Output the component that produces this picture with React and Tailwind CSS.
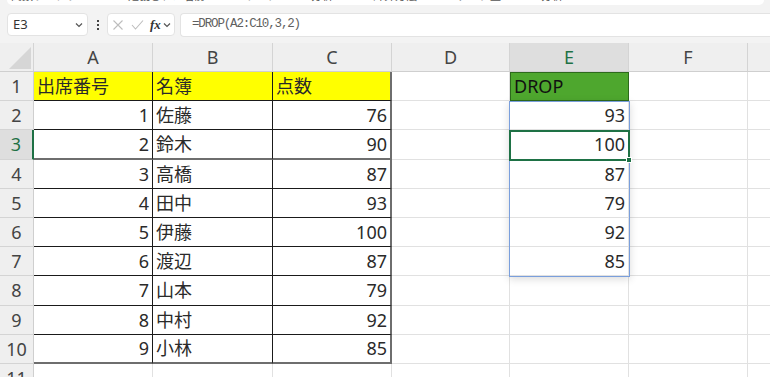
import React from "react";

const FONT = { fontFamily: '"Noto Sans", "Noto Sans CJK JP", sans-serif' };

const rowHeights = ["h-[29px]", "h-[29px]", "h-[30px]", "h-[29px]", "h-[29px]", "h-[29px]", "h-[29px]", "h-[30px]", "h-[29px]", "h-[29px]"];

const table = [
  ["出席番号", "名簿", "点数"],
  ["1", "佐藤", "76"],
  ["2", "鈴木", "90"],
  ["3", "高橋", "87"],
  ["4", "田中", "93"],
  ["5", "伊藤", "100"],
  ["6", "渡辺", "87"],
  ["7", "山本", "79"],
  ["8", "中村", "92"],
  ["9", "小林", "85"],
];

const eCol = ["DROP", "93", "100", "87", "79", "92", "85"];

function Chevron({ className }) {
  return (
    <svg className={className} width="10" height="10" viewBox="0 0 10 10" fill="none" stroke="#555" strokeWidth="1.2">
      <path d="M2 3.5 L5 6.5 L8 3.5" />
    </svg>
  );
}

function TableCell({ r, c, text }) {
  const yellow = r === 0;
  const bottomThick = r === 2 || r === 9;
  const base = "flex items-center px-[3px] text-[18px] text-[#2a2a2a] shrink-0 ";
  let w = c === 0 ? "w-[119px] " : c === 1 ? "w-[120px] " : "w-[119px] ";
  let right = c === 2 ? "border-r-2 border-r-[#6e6e6e] " : "border-r border-r-[#1a1a1a] ";
  let bottom = bottomThick ? "border-b-2 border-b-[#6e6e6e] " : "border-b border-b-[#1a1a1a] ";
  let bg = yellow ? "bg-[#ffff00] " : "bg-white ";
  let align = !yellow && (c === 0 || c === 2) ? "justify-end " : "justify-start ";
  return <div className={base + w + right + bottom + bg + align}>{text}</div>;
}

export default function App() {
  return (
    <div className="w-[770px] h-[377px] overflow-hidden bg-white relative" style={FONT}>
      {/* Top area */}
      <div className="h-[43px] bg-[#f3f3f3] flex flex-col">
        <div className="h-[5px] ml-[7px] mr-[6px] bg-white rounded-b-[5px] overflow-hidden flex gap-[40px] pl-[4px] text-[11px] text-[#555] leading-none">
          <span className="-mt-[10px]">関数ライブラリ</span>
          <span className="-mt-[10px]">定義された名前</span>
          <span className="-mt-[10px]">ワークシート分析</span>
          <span className="-mt-[10px]">計算方法</span>
          <span className="-mt-[10px]">データ型</span>
          <span className="-mt-[10px]">分析</span>
        </div>
        <div className="flex items-center mt-[8px] h-[23px]">
          <div className="ml-[7px] w-[81px] h-[23px] bg-white border border-[#e3e3e3] rounded-[4px] flex items-center justify-between pl-[5px] pr-[3px]">
            <span className="text-[13px] text-[#333]" style={{ fontFamily: '"Noto Sans", sans-serif' }}>E3</span>
            <Chevron />
          </div>
          <div className="w-[19px] flex flex-col items-center justify-center gap-[2px]">
            <span className="w-[2px] h-[2px] bg-[#444]"></span>
            <span className="w-[2px] h-[2px] bg-[#444]"></span>
            <span className="w-[2px] h-[2px] bg-[#444]"></span>
          </div>
          <div className="w-[68px] h-[23px] bg-white border border-[#e3e3e3] rounded-[4px] flex items-center pl-[4px]">
            <svg width="12" height="12" viewBox="0 0 12 12" stroke="#bdbdbd" strokeWidth="1.1" fill="none">
              <path d="M1.5 1.5 L10.5 10.5 M10.5 1.5 L1.5 10.5" />
            </svg>
            <svg className="ml-[7px]" width="13" height="12" viewBox="0 0 13 12" stroke="#bdbdbd" strokeWidth="1.1" fill="none">
              <path d="M1 6 L4.5 10 L12 1.5" />
            </svg>
            <span className="ml-[6px] text-[13px] italic font-bold text-[#333] leading-none" style={{ fontFamily: '"Liberation Serif", serif' }}>fx</span>
            <Chevron className="ml-[1px]" />
          </div>
          <div className="ml-[5px] flex-1 h-[24px] bg-white border border-r-0 border-[#e3e3e3] rounded-l-[4px] flex items-center pl-[11px]">
            <span className="text-[12.5px] tracking-[-1.15px] text-[#5f5f5f]" style={{ fontFamily: '"Liberation Mono", monospace' }}>=DROP(A2:C10,3,2)</span>
          </div>
        </div>
      </div>

      {/* Grid */}
      <div className="relative">
        {/* column header */}
        <div className="flex h-[29px] bg-[#efefef] border-b border-b-[#cfcfcf] text-[18px] text-[#444]">
          <div className="w-[34px] shrink-0 relative border-r border-r-[#d4d4d4]">
            <svg className="absolute right-[2px] bottom-[2px]" width="22" height="22" viewBox="0 0 22 22">
              <path d="M22 0 L22 22 L0 22 Z" fill="#d6d6d6" />
            </svg>
          </div>
          <div className="w-[119px] shrink-0 flex items-center justify-center border-r border-r-[#d4d4d4]">A</div>
          <div className="w-[120px] shrink-0 flex items-center justify-center border-r border-r-[#d4d4d4]">B</div>
          <div className="w-[119px] shrink-0 flex items-center justify-center border-r border-r-[#d4d4d4]">C</div>
          <div className="w-[118px] shrink-0 flex items-center justify-center border-r border-r-[#d4d4d4]">D</div>
          <div className="w-[119px] shrink-0 flex items-center justify-center border-r border-r-[#d4d4d4] bg-[#dedede] text-[#1e7145]">E</div>
          <div className="w-[119px] shrink-0 flex items-center justify-center border-r border-r-[#d4d4d4]">F</div>
          <div className="flex-1"></div>
        </div>

        {/* rows */}
        {table.map((row, r) => (
          <div key={r} className={"flex " + rowHeights[r]}>
            <div
              className={
                r === 2
                  ? "w-[34px] shrink-0 flex items-center justify-center bg-[#dedede] text-[#1e7145] text-[18px] border-r-2 border-r-[#1e7145] border-b border-b-[#d4d4d4]"
                  : "w-[34px] shrink-0 flex items-center justify-center bg-[#efefef] text-[#444] text-[18px] border-r border-r-[#cfcfcf] border-b border-b-[#d4d4d4]"
              }
            >
              {r + 1}
            </div>
            {row.map((t, c) => (
              <TableCell key={c} r={r} c={c} text={t} />
            ))}
            <div className="w-[118px] shrink-0 border-r border-r-[#e1e1e1] border-b border-b-[#e1e1e1]"></div>
            {r === 0 ? (
              <div className="w-[119px] shrink-0 flex items-center px-[3px] text-[18px] text-[#111] bg-[#4ea72e] border border-[#2d6a1c]">
                DROP
              </div>
            ) : r < 7 ? (
              <div className="w-[119px] shrink-0 flex items-center justify-end px-[3px] text-[18px] text-[#2a2a2a] border-r border-r-[#e1e1e1] border-b border-b-[#e1e1e1]">
                {eCol[r]}
              </div>
            ) : (
              <div className="w-[119px] shrink-0 border-r border-r-[#e1e1e1] border-b border-b-[#e1e1e1]"></div>
            )}
            <div className="w-[119px] shrink-0 border-r border-r-[#e1e1e1] border-b border-b-[#e1e1e1]"></div>
            <div className="flex-1 border-b border-b-[#e1e1e1]"></div>
          </div>
        ))}

        {/* row 11 partial */}
        <div className="flex h-[29px]">
          <div className="w-[34px] shrink-0 flex items-center justify-center bg-[#efefef] text-[#444] text-[18px] border-r border-r-[#cfcfcf]">
            11
          </div>
          <div className="w-[119px] shrink-0 border-r border-r-[#e1e1e1]"></div>
          <div className="w-[120px] shrink-0 border-r border-r-[#e1e1e1]"></div>
          <div className="w-[119px] shrink-0 border-r border-r-[#e1e1e1]"></div>
          <div className="w-[118px] shrink-0 border-r border-r-[#e1e1e1]"></div>
          <div className="w-[119px] shrink-0 border-r border-r-[#e1e1e1]"></div>
          <div className="w-[119px] shrink-0 border-r border-r-[#e1e1e1]"></div>
          <div className="flex-1"></div>
        </div>

        {/* spill range outline */}
        <div className="absolute left-[509px] top-[58px] w-[121px] h-[176px] border border-[#7a9fdc] shadow-[0_2px_8px_rgba(0,0,0,0.15)] pointer-events-none"></div>
        {/* active cell */}
        <div className="absolute left-[509px] top-[87px] w-[121px] h-[31px] border-2 border-[#1e7145] pointer-events-none"></div>
        <div className="absolute left-[626px] top-[114px] w-[6px] h-[6px] bg-[#1e7145] border border-white pointer-events-none"></div>
      </div>
    </div>
  );
}
